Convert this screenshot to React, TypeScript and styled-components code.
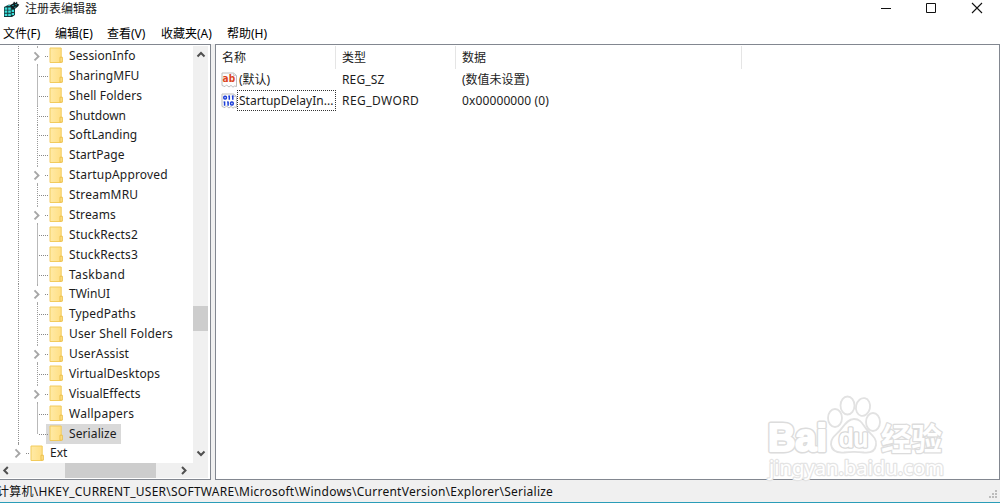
import React from 'react';
import styled, { createGlobalStyle, css } from 'styled-components';

const Global = createGlobalStyle`
  * { box-sizing: border-box; }
  html, body { margin: 0; padding: 0; background: #fff; overflow: hidden; }
`;

const Window = styled.div`
  position: relative;
  display: flex;
  flex-direction: column;
  width: 1000px;
  height: 503px;
  background: #fff;
  overflow: hidden;
  font-family: 'Noto Sans', 'Noto Sans CJK SC', sans-serif;
  font-size: 12px;
  line-height: 16px;
  color: #1c1c1c;
  border-bottom: 1px solid #2a9db8;
`;

const Text = styled.span<{ $spacing?: number }>`
  white-space: pre;
  letter-spacing: ${(p) => p.$spacing ?? 0}px;
`;

const TitleBar = styled.header`
  display: flex;
  align-items: center;
  height: 24px;
  padding: 0 17px 6px 3px;
`;

const Title = styled.div`
  flex: 1;
  padding-left: 5px;
  height: 16px;
`;

const Controls = styled.div`
  display: flex;
  align-items: center;
  gap: 34px;
  padding-bottom: 2px;
  svg { display: block; }
`;

const MenuBar = styled.nav`
  display: flex;
  height: 20px;
  padding: 2px 0 0 3px;
  color: #000;
`;

const MenuItem = styled.div<{ $width: number }>`
  width: ${(p) => p.$width}px;
  white-space: nowrap;
`;

const Body = styled.main`
  display: flex;
  height: 436px;
  background: #f0f0f0;
  gap: 4px;
`;

const TreePane = styled.section`
  display: grid;
  grid-template-columns: 193px 15px;
  grid-template-rows: 417px 15px;
  width: 211px;
  padding-top: 1px;
  background: #fff;
  border: solid #828790;
  border-width: 1px 1px 1px 0;
  overflow: hidden;
`;

const Tree = styled.ul`
  margin: 0;
  padding: 0;
  list-style: none;
  overflow: hidden;
  height: 417px;
`;

const TreeRow = styled.li`
  display: flex;
  align-items: center;
  height: 19.885px;
`;

const GuideArt = styled.svg`
  display: block;
  flex: none;
  overflow: visible;
  z-index: 1;
`;

const Label = styled.div<{ $selected?: boolean }>`
  display: flex;
  align-items: center;
  height: 20px;
  padding: 0 4px 0 3px;
  gap: 5px;
  ${(p) => p.$selected && css`background: #d9d9d9;`}
  svg { display: block; flex: none; }
`;

const VScroll = styled.div`
  display: flex;
  flex-direction: column;
  align-items: center;
  background: #f0f0f0;
  svg { display: block; }
`;

const VThumb = styled.div`
  width: 15px;
  height: 25px;
  margin: 244px 0 115px;
  background: #cdcdcd;
`;

const HScroll = styled.div`
  grid-column: 1 / 3;
  display: flex;
  align-items: center;
  background: #f0f0f0;
  svg { display: block; }
`;

const HThumb = styled.div`
  width: 91px;
  height: 15px;
  margin: 0 22px 0 53px;
  background: #cdcdcd;
`;

const ListPane = styled.section`
  flex: 1;
  background: #fff;
  border: 1px solid #828790;
`;

const HeaderRow = styled.div`
  display: grid;
  grid-template-columns: 120px 120px 286px;
  height: 24px;
  padding-top: 1px;
`;

const HeaderCell = styled.div`
  padding: 4px 0 0 6px;
  border-right: 1px solid #e5e5e5;
`;

const ValueRow = styled.div`
  display: grid;
  grid-template-columns: 21px 105px 120px 286px;
  height: 21px;
  align-items: center;
  svg { display: block; margin-left: 5px; }
  > span { padding-top: 1px; }
`;

const ValueName = styled.div<{ $focused?: boolean }>`
  width: 99px;
  height: 21px;
  padding: 2px 1px 0;
  white-space: nowrap;
  border: 1px dotted ${(p) => (p.$focused ? '#333' : 'transparent')};
`;

const StatusBar = styled.footer`
  display: flex;
  justify-content: space-between;
  height: 22px;
  padding: 4px 2px 0 0;
  background: #f0f0f0;
  overflow: hidden;
  svg { display: block; margin-top: 5px; }
`;

const Path = styled.div`
  margin-left: -3px;
  color: #111;
  white-space: nowrap;
  letter-spacing: 0.245px;
`;

const Watermark = styled.svg`
  position: absolute;
  left: 760px;
  top: 390px;
`;

type Guide = 'dots' | 'solid';
type Node = { name: string; expandable?: boolean; guide?: Guide; spacing?: number };

const nodes: Node[] = [
  { name: 'SessionInfo', expandable: true, spacing: 0.1 },
  { name: 'SharingMFU', guide: 'solid', spacing: 0.1 },
  { name: 'Shell Folders', guide: 'solid', spacing: 0.12 },
  { name: 'Shutdown', spacing: 0 },
  { name: 'SoftLanding', spacing: 0.02 },
  { name: 'StartPage', spacing: 0.04 },
  { name: 'StartupApproved', expandable: true, spacing: 0.18 },
  { name: 'StreamMRU', spacing: 0.2 },
  { name: 'Streams', expandable: true, spacing: 0.1 },
  { name: 'StuckRects2', guide: 'solid', spacing: 0.14 },
  { name: 'StuckRects3', guide: 'solid', spacing: 0.14 },
  { name: 'Taskband', guide: 'solid', spacing: 0.35 },
  { name: 'TWinUI', expandable: true, spacing: 0 },
  { name: 'TypedPaths', spacing: 0.12 },
  { name: 'User Shell Folders', spacing: 0.17 },
  { name: 'UserAssist', expandable: true, spacing: 0.15 },
  { name: 'VirtualDesktops', spacing: 0.13 },
  { name: 'VisualEffects', expandable: true, spacing: 0.05 },
  { name: 'Wallpapers', guide: 'solid', spacing: 0.25 },
  { name: 'Serialize', guide: 'solid', spacing: 0.1 },
];

const Chevron = ({ x }: { x: number }) => (
  <path d={`M${x} 6.4l4 4-4 4`} fill="none" stroke="#a6a6a6" strokeWidth="1.9" />
);

const Guides = ({ node, last }: { node: Node; last: boolean }) => {
  const solid = node.guide === 'solid';
  const stroke = solid ? '#b9b9b9' : '#999';
  const dash = solid ? undefined : '1 1';
  return (
    <GuideArt width="46" height="20" viewBox="0 0 46 20">
      <path d="M18.5 0v20" stroke="#8f8f8f" strokeDasharray="1 1" />
      {node.expandable ? (
        <>
          <path d="M37.5 0v2M37.5 18v2" stroke="#aaa" />
          <Chevron x={34.5} />
          <path d="M45 10.5h3" stroke="#888" strokeDasharray="1 1" />
        </>
      ) : (
        <>
          <path d={last ? 'M37.5 0v10' : 'M37.5 0v20'} stroke={stroke} strokeDasharray={dash} />
          <path d="M39 10.5h9" stroke="#888" strokeDasharray="1 1" />
        </>
      )}
    </GuideArt>
  );
};

const Folder = () => (
  <svg width="15" height="17" viewBox="0 0 15 17">
    <defs>
      <linearGradient id="folder" x1="0" x2="1" y1="0" y2="0">
        <stop offset="0" stopColor="#ffeaa6" />
        <stop offset="1" stopColor="#ffdf85" />
      </linearGradient>
    </defs>
    <path d="M1 1h11.200v14.500H1z" fill="url(#folder)" stroke="#f2cb5c" />
    <path d="M11 10.200h2.300v5H11z" fill="#ffe18a" stroke="#ecc04c" />
  </svg>
);

const Arrow = ({ d }: { d: string }) => (
  <svg width="12" height="16" viewBox="0 0 12 16">
    <path d={d} fill="none" stroke="#505050" strokeWidth="2" />
  </svg>
);

const ValueIcon = ({ binary }: { binary?: boolean }) => (
  <svg width="17" height="18" viewBox="0 0 17 18">
    <path d="M1 2h11.500l3 2.500v11l-2-.5-1.500 1.200-2-1.800-2 1.600-2.500-2-1.500 1.600-3-1.100z" fill="#fdfdfd" stroke="#bdbdbd" />
    <path d="M12.500 2v2.500h3" fill="none" stroke="#cfcfcf" />
    {binary ? (
      <g fill="none" stroke="#1c3fd8" strokeWidth="1.500">
        <rect x="2.800" y="4.200" width="2.600" height="2.900" rx="1" />
        <path d="M8.300 3.500v4.300M11.800 3.500v4.300" />
        <path d="M7.300 4.200h1M10.800 4.200h1" strokeWidth="1" />
        <path d="M3.600 9.400v4.300M7.100 9.400v4.300" />
        <path d="M2.600 10h1M6.100 10h1" strokeWidth="1" />
        <rect x="9.600" y="10.100" width="2.600" height="2.900" rx="1" />
      </g>
    ) : (
      <text x="1.600" y="11" fontFamily="DejaVu Sans" fontWeight="700" fontSize="10.500" textLength="12.500" lengthAdjust="spacingAndGlyphs" fill="#dc4420">ab</text>
    )}
  </svg>
);

const AppIcon = () => (
  <svg width="17" height="17" viewBox="0 0 17 17">
    <path d="M1 6l5-2.500 6 2.500v8l-3 2H1z" fill="#16383b" />
    <path d="M1.700 6.500h2.600v2.200H1.700zM5.200 6.500h2.600v2.200H5.200zM1.700 9.600h2.600v2.200H1.700zM5.200 9.600h2.600v2.200H5.200zM1.700 12.700h2.600v2.200H1.700zM5.200 12.700h2.600v2.200H5.200zM8.700 8.800H11V11H8.700zM8.700 12H11v2H8.700zM4 5l2-1 2 1z" fill="#3ce0dc" />
    <path d="M7 4l3-1.500 1-2 1.500 1.500 1.500-1.500.5 2.500 1.800.5-1.300 2-2.500 2L9.500 8z" fill="#101c1e" />
    <path d="M8.800 4.800l1.500-1 .5 1.400zM12 3.600l1.400-.8.3 1.600zM11 6.300l1.800-.8-.6 1.500z" fill="#26c2c6" />
  </svg>
);

type OutlinedProps = {
  children: string;
  x: number;
  y: number;
  size: number;
  length: number;
  family: string;
  weight: number;
  spread: number;
  color?: string;
};

const Outlined = ({ children, x, y, size, length, family, weight, spread, color = '#dcdcdc' }: OutlinedProps) => (
  <text
    x={x}
    y={y}
    fontFamily={family}
    fontSize={size}
    fontWeight={weight}
    textLength={length}
    lengthAdjust="spacingAndGlyphs"
    fill="#fff"
    stroke={color}
    strokeWidth={spread}
    strokeLinejoin="round"
    paintOrder="stroke"
  >
    {children}
  </text>
);

export default function App() {
  return (
    <>
      <Global />
      <Window>
        <TitleBar>
          <AppIcon />
          <Title>注册表编辑器</Title>
          <Controls>
            <svg width="12" height="12"><path d="M2 6.5h10" stroke="#111" /></svg>
            <svg width="12" height="12"><path d="M1.500 1.500h9v9h-9z" fill="none" stroke="#111" /></svg>
            <svg width="12" height="12"><path d="M1 1l10 10M11 1L1 11" stroke="#111" strokeWidth="1.100" /></svg>
          </Controls>
        </TitleBar>
        <MenuBar>
          <MenuItem $width={52}>文件(F)</MenuItem>
          <MenuItem $width={52}>编辑(E)</MenuItem>
          <MenuItem $width={54}>查看(V)</MenuItem>
          <MenuItem $width={66}>收藏夹(A)</MenuItem>
          <MenuItem $width={50}>帮助(H)</MenuItem>
        </MenuBar>
        <Body>
          <TreePane>
            <Tree>
              {nodes.map((n, i) => (
                <TreeRow key={n.name}>
                  <Guides node={n} last={i === nodes.length - 1} />
                  <Label $selected={n.name === 'Serialize'}>
                    <Folder />
                    <Text $spacing={n.spacing}>{n.name}</Text>
                  </Label>
                </TreeRow>
              ))}
              <TreeRow>
                <GuideArt width="27" height="20" viewBox="0 0 27 20">
                  <path d="M18.500 0v2" stroke="#999" />
                  <Chevron x={15.5} />
                  <path d="M26 10.500h3" stroke="#888" strokeDasharray="1 1" />
                </GuideArt>
                <Label>
                  <Folder />
                  <Text>Ext</Text>
                </Label>
              </TreeRow>
            </Tree>
            <VScroll>
              <Arrow d="M2.500 10.500L6 7l3.500 3.500" />
              <VThumb />
              <Arrow d="M2.500 5.500L6 9l3.500-3.500" />
            </VScroll>
            <HScroll>
              <Arrow d="M7.800 4L4.300 7.500 7.800 11" />
              <HThumb />
              <Arrow d="M4 4l3.500 3.500L4 11" />
            </HScroll>
          </TreePane>
          <ListPane>
            <HeaderRow>
              <HeaderCell>名称</HeaderCell>
              <HeaderCell>类型</HeaderCell>
              <HeaderCell>数据</HeaderCell>
            </HeaderRow>
            <ValueRow>
              <ValueIcon />
              <ValueName>(默认)</ValueName>
              <Text $spacing={0.15}>REG_SZ</Text>
              <Text>(数值未设置)</Text>
            </ValueRow>
            <ValueRow>
              <ValueIcon binary />
              <ValueName $focused>StartupDelayIn...</ValueName>
              <Text $spacing={0.42}>REG_DWORD</Text>
              <Text $spacing={0.12}>0x00000000 (0)</Text>
            </ValueRow>
          </ListPane>
        </Body>
        <StatusBar>
          <Path>计算机\HKEY_CURRENT_USER\SOFTWARE\Microsoft\Windows\CurrentVersion\Explorer\Serialize</Path>
          <svg width="10" height="10">
            <path d="M7 1h2v2H7zM4 4h2v2H4zM7 4h2v2H7zM1 7h2v2H1zM4 7h2v2H4zM7 7h2v2H7z" fill="#bcbcbc" />
          </svg>
        </StatusBar>
        <Watermark width="200" height="100" viewBox="0 0 200 100">
          <g fill="#fff" stroke="#e2e2e2" strokeWidth="1.800">
            <ellipse cx="75" cy="28" rx="7" ry="9" />
            <ellipse cx="87.500" cy="15.500" rx="7" ry="9" />
            <ellipse cx="103" cy="17" rx="7" ry="9" transform="rotate(12 103 17)" />
            <ellipse cx="113" cy="32" rx="7" ry="9" />
            <path d="M94 29c8 0 9 7 14 12s9 8 8 14c-1 7-7 8-12 7.500-7-1-13-1-20 0-6 .5-12-1-13-8-.5-6 4-9 8-13s8-12.500 15-12.500z" />
          </g>
          <Outlined x={8} y={61} size={39} length={59} family="Liberation Sans" weight={700} spread={5}>Bai</Outlined>
          <Outlined x={8} y={61} size={39} length={59} family="Liberation Sans" weight={700} spread={2} color="#fff">Bai</Outlined>
          <Outlined x={79} y={57} size={25} length={29} family="Liberation Sans" weight={400} spread={3.5} color="#d8d8d8">du</Outlined>
          <Outlined x={79} y={57} size={25} length={29} family="Liberation Sans" weight={400} spread={1} color="#fff">du</Outlined>
          <Outlined x={121} y={60} size={31} length={61} family="Noto Sans CJK SC" weight={700} spread={2.6}>经验</Outlined>
          <Outlined x={9} y={85} size={19} length={175} family="Noto Sans" weight={400} spread={2.4} color="#e4e4e4">jingyan.baidu.com</Outlined>
        </Watermark>
      </Window>
    </>
  );
}
